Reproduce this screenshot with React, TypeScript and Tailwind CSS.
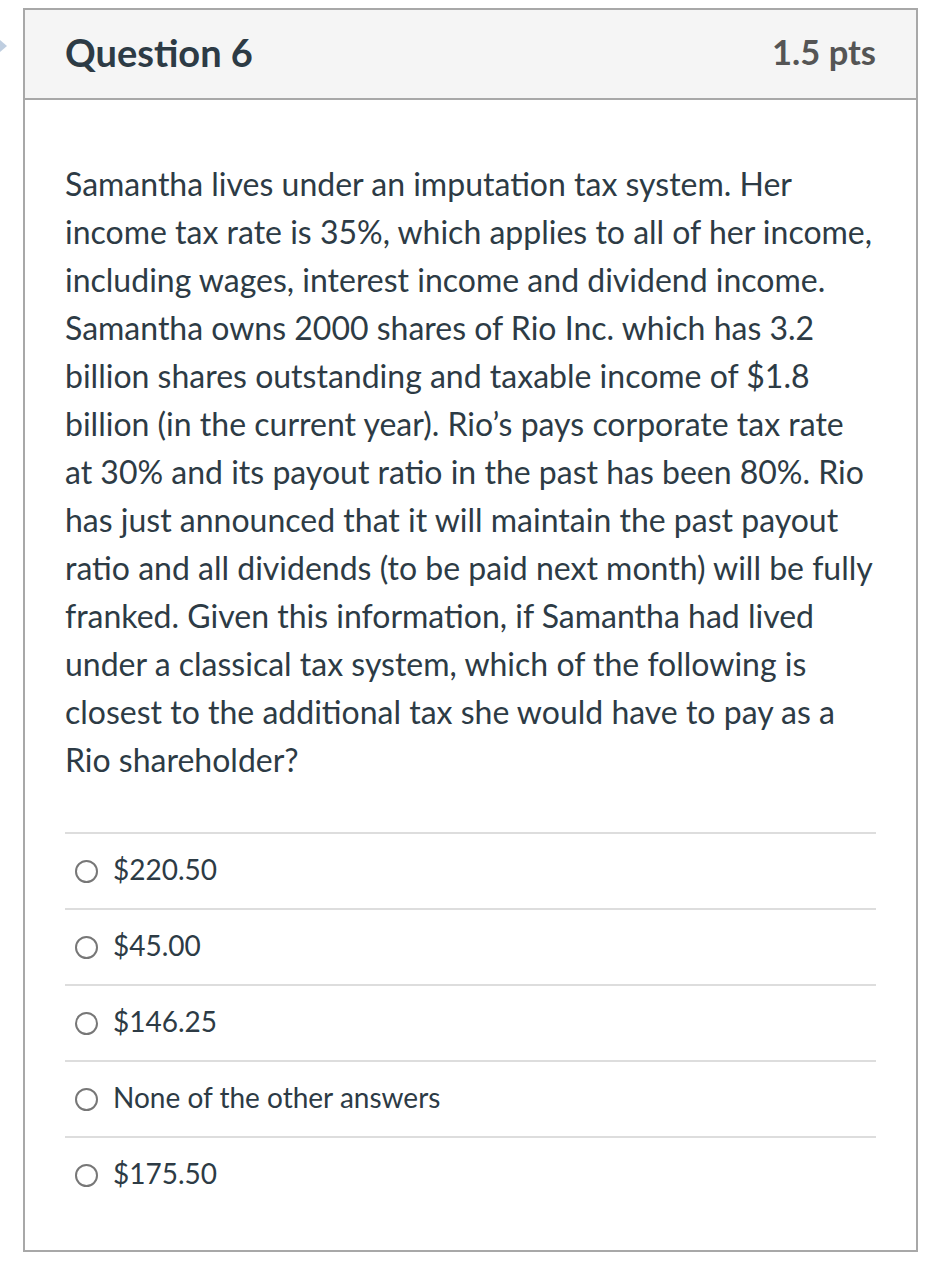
import React from 'react';

const answers = ['$220.50', '$45.00', '$146.25', 'None of the other answers', '$175.50'];

const lines = [
  'Samantha lives under an imputation tax system. Her',
  'income tax rate is 35%, which applies to all of her income,',
  'including wages, interest income and dividend income.',
  'Samantha owns 2000 shares of Rio Inc. which has 3.2',
  'billion shares outstanding and taxable income of $1.8',
  'billion (in the current year). Rio\u2019s pays corporate tax rate',
  'at 30% and its payout ratio in the past has been 80%. Rio',
  'has just announced that it will maintain the past payout',
  'ratio and all dividends (to be paid next month) will be fully',
  'franked. Given this information, if Samantha had lived',
  'under a classical tax system, which of the following is',
  'closest to the additional tax she would have to pay as a',
  'Rio shareholder?',
];

export default function App() {
  return (
    <div className="relative min-h-[1262px] w-[934px] bg-white pt-2 pl-[23px]" style={{ fontFamily: 'Lato, "Noto Sans", sans-serif' }}>
      {/* little marker peeking in from the left */}
      <svg className="absolute left-0 top-[38px]" width="10" height="16" viewBox="0 0 10 16">
        <path d="M0 2 L7 8 L0 14 Z" fill="#a9bdd6" opacity="0.75" />
      </svg>

      <div className="w-[895px] border-2 border-[#a8a8a8]">
        <div className="flex h-[90px] items-center justify-between border-b-2 border-[#a8a8a8] bg-[#f5f5f5] pb-1 pl-10 pr-10">
          <h2 className="text-[38px] font-bold leading-none text-[#2d3b45]">Question 6</h2>
          <div className="text-[34.5px] font-bold leading-none text-[#555555]">1.5 pts</div>
        </div>

        <div className="px-10 pt-[60px] pb-[38px]">
          <p className="text-[32px] leading-[48px] text-[#2d3b45] whitespace-nowrap">
            {lines.map((l, i) => (
              <React.Fragment key={i}>
                {l}
                {i < lines.length - 1 && <br />}
              </React.Fragment>
            ))}
          </p>

          <div className="mt-12">
            {answers.map(a => (
              <div key={a} className="flex h-[76px] items-center border-t-2 border-[#dddddd]">
                <span className="ml-[10px] mr-[15px] inline-block h-[23px] w-[23px] rounded-full border-2 border-[#777777] bg-white" />
                <span className="mb-[5px] text-[28px] leading-none text-[#2d3b45]">{a}</span>
              </div>
            ))}
          </div>
        </div>
      </div>
    </div>
  );
}
